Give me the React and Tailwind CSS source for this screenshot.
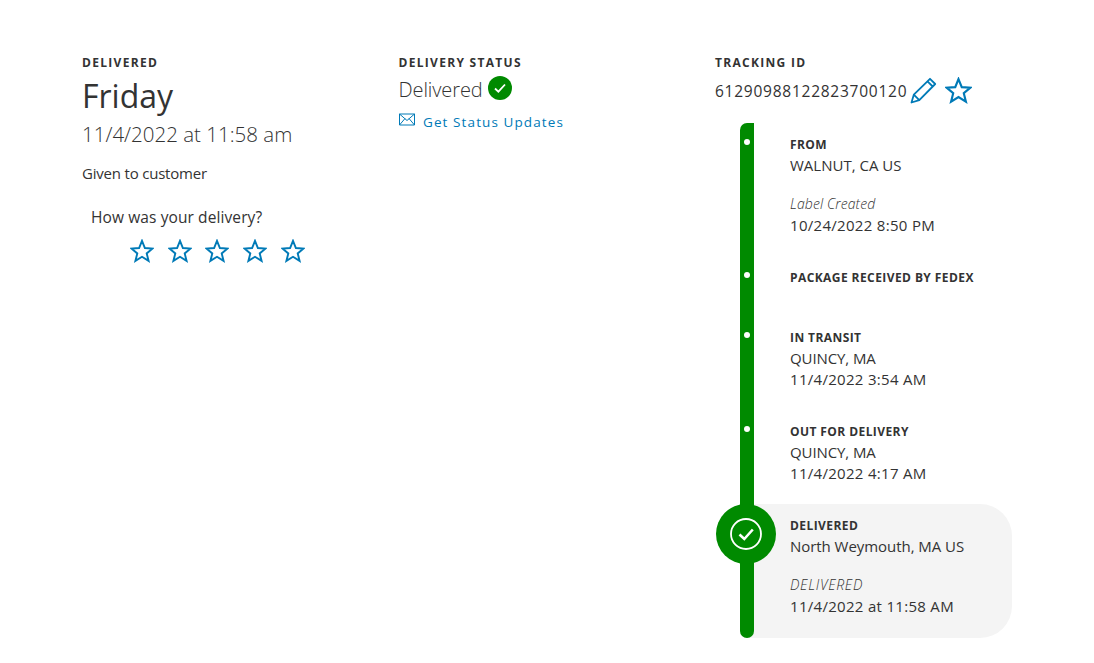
import React from 'react';

const Star = ({ size = 24 }) => (
  <svg width={size} height={size} viewBox="0 0 24 24" fill="none" stroke="#007ab7" strokeWidth="1.9" strokeLinejoin="miter">
    <path d="M12 1.800l2.900 7.200 7.700.5-5.900 4.900 1.900 7.500L12 17.800l-6.600 4.100 1.900-7.500-5.900-4.900 7.700-.5z" />
  </svg>
);

const Label = ({ children }) => (
  <div className="text-[12px] leading-[16px] font-bold tracking-[1.3px] text-[#333]">{children}</div>
);

const StopLabel = ({ children }) => (
  <div className="text-[12px] leading-[16px] font-bold tracking-[0.42px] text-[#333]">{children}</div>
);

const Place = ({ children, className = 'tracking-[-0.1px]' }) => (
  <div className={`text-[15px] leading-[21px] ${className}`}>{children}</div>
);

const When = ({ children }) => (
  <div className="text-[15px] leading-[21px] tracking-[0.3px]">{children}</div>
);

function Stop({ height, children }) {
  return (
    <div className={`flex ${height}`}>
      <div className="w-[14px] bg-[#008a00] flex justify-center pt-[16px]">
        <div className="w-[6px] h-[6px] rounded-full bg-white"></div>
      </div>
      <div className="ml-[36px] pt-[14px]">{children}</div>
    </div>
  );
}

export default function App() {
  return (
    <div className="h-[663px] bg-white pl-[82px] pt-[55px] font-['Open_Sans',sans-serif] text-[#333] overflow-hidden">
      <div className="grid grid-cols-[316.5px_316.5px_300px]">
        {/* DELIVERED */}
        <div>
          <Label>DELIVERED</Label>
          <div className="text-[32px] leading-[40px] mt-[5px]">Friday</div>
          <div className="text-[20.5px] leading-[26px] font-light mt-[5px]">11/4/2022 at 11:58 am</div>
          <div className="text-[15px] leading-[20px] mt-[16px] tracking-[-0.2px]">Given to customer</div>
          <div className="text-[15.5px] leading-[22px] mt-[23px] ml-[9px] tracking-[0.1px]">How was your delivery?</div>
          <div className="flex gap-[13.7px] ml-[48px] mt-[11px]">
            <Star />
            <Star />
            <Star />
            <Star />
            <Star />
          </div>
        </div>

        {/* STATUS */}
        <div>
          <Label>DELIVERY STATUS</Label>
          <div className="flex items-center mt-[4px] h-[26px]">
            <span className="text-[20px] font-light pt-[3px] tracking-[-0.1px]">Delivered</span>
            <div className="ml-[5px] w-[24px] h-[24px] rounded-full bg-[#008a00] flex items-center justify-center">
              <svg width="14" height="14" viewBox="0 0 14 14" fill="none" stroke="white" strokeWidth="1.8">
                <path d="M2 7.500l3.400 3.200L12 3.500" />
              </svg>
            </div>
          </div>
          <div className="flex items-center mt-[11px] text-[#007ab7]">
            <svg width="16" height="13" viewBox="0 0 16 13" fill="none" stroke="#007ab7" strokeWidth="1" className="-mt-[5px]">
              <path d="M.5 1h15v11H.5zM.5 1L8 7.500 15.500 1M.5 12l5.500-6.500M15.500 12L10 5.500" />
            </svg>
            <span className="ml-[8.5px] text-[13.5px] leading-[20px] tracking-[1.1px]">Get Status Updates</span>
          </div>
        </div>

        {/* TRACKING */}
        <div>
          <Label>TRACKING ID</Label>
          <div className="flex items-center mt-[5px] h-[30px]">
            <span className="text-[15.5px] tracking-[0.75px] pt-[1px]">61290988122823700120</span>
            <svg width="27" height="27" viewBox="0 0 27 27" fill="none" stroke="#007ab7" strokeWidth="1.8" strokeLinejoin="round" className="ml-[3px] -mt-[2px]">
              <path d="M1.500 25.500l2.300-7.800L20 1.800l5.200 5.200L9.300 23.200zM3.800 17.700l5.500 5.500M17.500 4.300l5.200 5.200" />
            </svg>
            <div className="ml-[7.5px] -mt-[2px]">
              <Star size={27} />
            </div>
          </div>

          <div className="ml-[25px] mt-[17px] relative">
            <div className="rounded-t-[7px] overflow-hidden">
              <Stop height="h-[133px]">
                <StopLabel>FROM</StopLabel>
                <Place className="mt-[2px] tracking-[0px]">WALNUT, CA US</Place>
                <div className="text-[14px] leading-[18px] italic font-light tracking-[0.1px] mt-[19px]">Label Created</div>
                <div className="mt-[2px]">
                  <When>10/24/2022 8:50 PM</When>
                </div>
              </Stop>
            </div>
            <Stop height="h-[60px]">
              <StopLabel>PACKAGE RECEIVED BY FEDEX</StopLabel>
            </Stop>
            <Stop height="h-[94px]">
              <StopLabel>IN TRANSIT</StopLabel>
              <Place className="mt-[2px] tracking-[-0.1px]">QUINCY, MA</Place>
              <When>11/4/2022 3:54 AM</When>
            </Stop>
            <Stop height="h-[94px]">
              <StopLabel>OUT FOR DELIVERY</StopLabel>
              <Place className="mt-[2px] tracking-[-0.1px]">QUINCY, MA</Place>
              <When>11/4/2022 4:17 AM</When>
            </Stop>

            {/* delivered row */}
            <div className="flex h-[134px] w-[272px] bg-[#f4f4f4] rounded-r-[32px] rounded-bl-[7px]">
              <div className="w-[14px] bg-[#008a00] rounded-b-[7px]"></div>
              <div className="ml-[36px] pt-[14px]">
                <StopLabel>DELIVERED</StopLabel>
                <Place className="mt-[2px] tracking-[-0.05px]">North Weymouth, MA US</Place>
                <div className="text-[14px] leading-[18px] italic font-light tracking-[0.7px] mt-[19px]">DELIVERED</div>
                <div className="mt-[2px]">
                  <When>11/4/2022 at 11:58 AM</When>
                </div>
              </div>
            </div>
            <div className="absolute left-[-24px] top-[381px] w-[60px] h-[60px] rounded-full bg-[#008a00] flex items-center justify-center">
              <svg width="32" height="32" viewBox="0 0 32 32" fill="none" stroke="white">
                <circle cx="16" cy="16" r="15" strokeWidth="1.8" />
                <path d="M9.500 16.500l4.800 4.500 8.500-9.500" strokeWidth="2.600" />
              </svg>
            </div>
          </div>
        </div>
      </div>
    </div>
  );
}
